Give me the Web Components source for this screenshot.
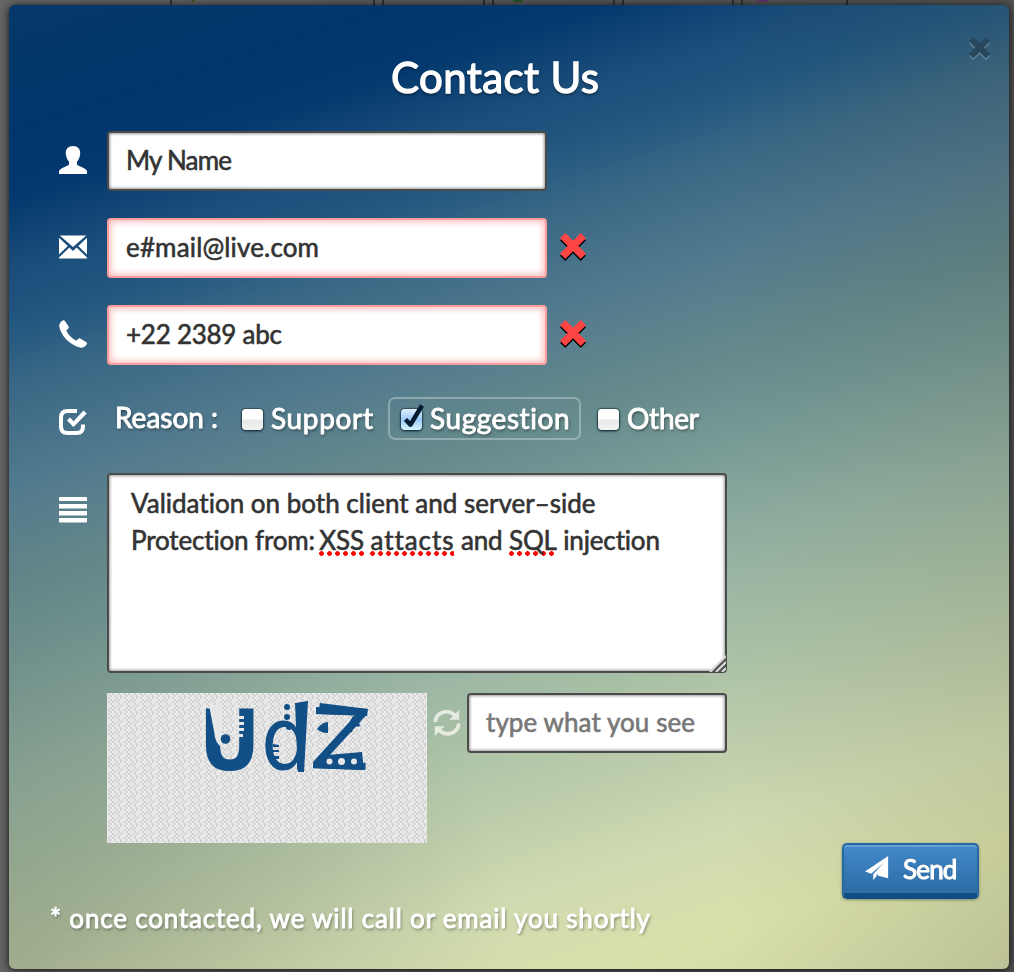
<!DOCTYPE html>
<html lang="en">
<head>
<meta charset="utf-8">
<title>Contact Us</title>
<style>
html,body{margin:0;height:972px;overflow:hidden;background:#565656;font-family:Lato,"Open Sans",sans-serif}
</style>
</head>
<body>
<contact-page></contact-page>
<script>
const define = (name, html, setup) => customElements.define(name, class extends HTMLElement {
  constructor() {
    super();
    this.attachShadow({mode: 'open'}).innerHTML = html;
  }
  connectedCallback() { if (setup) setup(this, this.shadowRoot); }
});

/* A single line of text tracked to fill a given width. */
define('fit-line', `<style>:host{display:block;white-space:nowrap;line-height:1}span{display:inline-block;-webkit-text-stroke:var(--stroke,.6px) currentColor}</style><span><slot></slot></span>`,
  (el, root) => {
    const s = root.querySelector('span');
    const w = +el.getAttribute('w');
    el.style.width = w + 'px';
    const n = el.textContent.length - 1;
    s.style.letterSpacing = ((w + 1 - s.getBoundingClientRect().width) / n).toFixed(3) + 'px';
  });

const icons = {
  user: '<path d="M14 0c4.700 0 7.500 3 7.200 7.500-.2 3.600-1.600 6.500-3.200 8.200v2.800c1 1.700 9 3.400 10 6.500V28H0v-3c1-3.100 9-4.800 10-6.500v-2.800C8.400 14 7 11.100 6.800 7.500 6.500 3 9.300 0 14 0z"/>',
  mail: '<path d="M.8 2.500h26.400L14 14zM0 4.800 8.800 13 0 21.500zM28 4.800V21.500L19.200 13zM10.400 14.500 14 18l3.600-3.500L28 24.500v1H0v-1z"/>',
  phone: '<path d="M3.200.8C4.500-.2 5.300.2 6.300 1.600L9.300 6c.8 1.300.6 2.200-.6 3.200L7.300 10.500c1.700 4 5.600 8 10 10.200l1.700-1.600c1-.9 1.900-1 3-.2l5 3.200c1.200.8 1.300 1.600.5 2.600-1.700 2.300-4.200 3.500-6.800 2.800C10.500 24.700 2 15.500.3 6.700-.1 4.500 1.100 2.300 3.200.8z"/>',
  check: '<path d="M18 3H8.500Q2 3 2 9.500v9Q2 25 8.500 25h9q6.500 0 6.500-6.500v-2" fill="none" stroke="#fff" stroke-width="4"/><path d="m8 12.500 3-3 3.600 3.700L24.500 2.500l3.300 3.100L14.500 19z"/>',
  lines: '<path d="M1 1h26a1 1 0 0 1 1 1v3H0V2a1 1 0 0 1 1-1zM0 8h28v4.500H0zM0 15h28v4.500H0zM0 22h28v3.500a1 1 0 0 1-1 1H1a1 1 0 0 1-1-1z"/>',
  refresh: '<path d="M2.300 13C2.500 3.700 14.500-.8 21.500 6.200M25.700 14.500C25.500 23.800 13.500 28.300 6.500 21.300" fill="none" stroke="currentColor" stroke-width="3.800"/><path d="M26.200 1v9.800h-9.800zM1.800 27V17.200h9.800z"/>',
  cross: '<path d="M0 5.500 5.500 0 13.500 8 21.500 0 27 5.500 19 13.500 27 21.500 21.500 27 13.500 19 5.500 27 0 21.500 8 13.500z"/>',
  plane: '<path d="M24 0 0 16l6.500 2.300L19.500 7 8.500 19v6l3.600-4.300L12 18.500l1.800 1.900L24 23z"/>'
};
define('ui-icon', `<style>:host{display:block;width:28px;height:28px;color:#fff;flex:none}svg{display:block;width:100%;height:100%;overflow:visible;fill:currentColor}</style><svg viewBox="0 0 28 28"></svg>`,
  (el, root) => { root.querySelector('svg').innerHTML = icons[el.getAttribute('name')]; });

define('form-row', `<style>:host{display:flex;align-items:flex-start;margin-left:50px;height:60px;margin-bottom:27px}
.i{width:48px;flex:none;padding-top:var(--icon-top,15px)}</style><div class="i"><slot name="icon"></slot></div><slot></slot>`);

define('text-box', `<style>:host{display:block;box-sizing:border-box;width:440px;height:60px;padding:14px 0 0 17px;background:#fff;color:#333;font-size:26px;border:2px solid #4b4b4b;border-radius:4px;box-shadow:inset 0 0 3px 1px #999;flex:none;position:relative}
:host([invalid]){border-color:#fc9c9c;box-shadow:inset 0 0 6px 2px #fdbcbc}
:host([hint]){color:#777}</style><slot></slot>`);

define('bad-mark', `<style>:host{display:block;margin:15px 0 0 13px}ui-icon{width:26px;height:26px;color:#ff4444;filter:drop-shadow(0 2px 0 #000)}</style><ui-icon name="cross"></ui-icon>`,
  (el, root) => root.querySelector('ui-icon').shadowRoot.querySelector('svg').setAttribute('viewBox', '0 0 27 27'));

define('check-option', `<style>:host{display:flex;box-sizing:border-box;height:43px;border:2px solid transparent;border-radius:7px;padding:5px 0 0 11px;flex:none;font-size:28px}
:host([on]){border-color:rgba(220,235,235,.38)}
.b{width:21px;height:21px;margin:5px 8px 0 0;border-radius:4px;background:linear-gradient(#fff 0 45%,#e9e9e9 55%,#f4f4f4);box-shadow:0 1px 3px #0b2733,0 0 1px 1px #3d5960;flex:none}
:host([on]) .b{background:linear-gradient(#e0f0ff,#9ccaf8 50%,#d3f4ff)}
svg{display:none;overflow:visible}:host([on]) svg{display:block}</style>
<div class="b"><svg width="21" height="21"><path d="m4.500 10.500 5 5.200L21-3.500" fill="none" stroke="#041b30" stroke-width="4.500" stroke-linejoin="round"/></svg></div><slot></slot>`);

define('spell-word', `<style>:host{display:inline-block;padding-bottom:3px;margin-bottom:-3px;background:radial-gradient(circle at 2.500px 2.500px,red 0 2px,transparent 2.700px) 0 100%/8px 5px repeat-x}</style><slot></slot>`);

define('captcha-image', `<style>:host{display:block;width:320px;height:150px;flex:none}svg{display:block;overflow:visible}text{font-family:"DejaVu Sans";fill:#114f86;stroke:#114f86;stroke-width:0}</style>
<svg width="320" height="150">
<defs><pattern id="p" width="16" height="16" patternUnits="userSpaceOnUse"><rect width="16" height="16" fill="#e9e9e9"/><path d="M1 0h2v2H1zM5 0h2v2H5zM11 0h2v2h-2zM3 2h2v2H3zM7 2h2v2H7zM13 2h2v2h-2zM1 4h2v2H1zM9 4h2v2H9zM13 4h2v2h-2zM3 6h2v2H3zM7 6h2v2H7zM11 6h2v2h-2zM1 8h2v2H1zM5 8h2v2H5zM9 8h2v2H9zM3 10h2v2H3zM11 10h2v2h-2zM15 10h1v2h-1zM5 12h2v2H5zM9 12h2v2H9zM13 12h2v2h-2zM3 14h2v2H3zM7 14h2v2H7zM11 14h2v2h-2z" fill="#d2d2d2"/></pattern></defs>
<rect width="320" height="150" fill="url(#p)"/>
<text transform="translate(92 76.500) scale(.91 1)" font-size="83" font-weight="700">U</text>
<text transform="translate(154 76) scale(.9 1)" font-size="88" style="stroke-width:0">d</text>
<text transform="translate(202 75) rotate(2) scale(1.050 1)" font-size="84" style="stroke-width:0">Z</text>
<g fill="#e7e7e7"><path d="M102 12h13v42q-7-3-8-16zM130 23h7v3h-7zM130 29h7v3h-7zM130 35h7v3h-7zM130 41h6v3h-6z"/></g>
<g fill="#114f86"><circle cx="118.500" cy="46" r="4.800"/><circle cx="180" cy="14" r="3"/><circle cx="180" cy="24" r="3"/><circle cx="182" cy="34" r="3"/><path d="M188 10l13-2-4 71h-6zM210 36q5-7 11-7v11q-7 0-11-4zM166 51l6 1v2h-6zM165 57h7v2h-7zM166 63h6v3h-6zM213 10l48 6-1 7-49-2zM220 62l35-3 2 18-50-2zM246 23l9 0-3 8 2 2-7 1-2 5-5 1-5 3z"/></g>
<g fill="#e7e7e7"><circle cx="222.500" cy="68.500" r="3"/><circle cx="234.500" cy="68.500" r="3.500"/><circle cx="247" cy="68.500" r="3"/></g>
</svg>`);

define('send-button', `<style>:host{display:flex;box-sizing:border-box;width:137px;height:56px;border:2px solid #2767a2;border-bottom:6px solid #104d84;border-radius:5px;background:linear-gradient(#4189ca,#2d6ca4);box-shadow:inset 0 2px 0 #65a0d6,0 1px 3px rgba(40,70,60,.5);padding:11px 0 0 21px;color:#fff;font-size:26px;text-shadow:0 -1px 1px #174d7d}
ui-icon{width:27px;height:27px;margin-right:11px}fit-line{--stroke:1.100px}</style><ui-icon name="plane"></ui-icon><fit-line w="54"><slot></slot></fit-line>`,
  (el, root) => {
    const s = root.querySelector('fit-line').shadowRoot.querySelector('span');
    s.style.letterSpacing = '-.8px';
  });

define('contact-dialog', `<style>
:host{display:block;position:relative;box-sizing:border-box;width:1000px;height:964px;margin-left:9px;border-radius:6px;overflow:hidden;color:#fff;
background:radial-gradient(ellipse 50% 50% at 0 100%,rgba(50,45,20,.2),transparent),linear-gradient(90deg,transparent 72%,rgba(50,45,20,.11)),
linear-gradient(162deg,#06396a 0,#00366b 10%,#03396e 15%,#1b4d7a 20.500%,#215680 24.500%,#3b6885 30%,#527a8e 37.500%,#64898c 45%,#719593 50%,#92b0a1 60%,#b4c7a8 72%,#cfdab1 82%,#d9e0aa 90%,#ced4a6 100%)}
.title{padding:51px 0 0 382px;height:75px;font-size:42px;text-shadow:0 2px 3px rgba(0,0,0,.5);--stroke:1.300px}
.close{position:absolute;left:960px;top:32px;width:22px;height:22px;color:#27475d;filter:drop-shadow(0 2px 0 #5d8098)}
.sh{text-shadow:1px 2px 3px rgba(0,0,0,.45);--stroke:.9px}
.reason{display:flex;align-items:flex-start;font-size:28px}
.reason>fit-line{margin:11px 13px 0 8px}
.reason check-option{margin-top:5px}
.grip{position:absolute;right:-1px;bottom:-1px}
.foot{display:flex;justify-content:flex-end;padding-right:30px}
.note{font-size:26px;margin:6px 0 0 41px}
</style>
<div class="title"><fit-line w="207">Contact Us</fit-line></div>
<ui-icon class="close" name="cross"></ui-icon>
<form-row><ui-icon slot="icon" name="user"></ui-icon><text-box><fit-line w="105">My Name</fit-line></text-box></form-row>
<form-row><ui-icon slot="icon" name="mail"></ui-icon><text-box invalid><fit-line w="192">e#mail@live.com</fit-line></text-box><bad-mark></bad-mark></form-row>
<form-row><ui-icon slot="icon" name="phone"></ui-icon><text-box invalid><fit-line w="155">+22 2389 abc</fit-line></text-box><bad-mark></bad-mark></form-row>
<form-row style="height:54px;--icon-top:16px"><ui-icon slot="icon" name="check"></ui-icon>
<div class="reason sh"><fit-line w="102">Reason :</fit-line>
<check-option style="margin-left:-1px"><fit-line w="101">Support</fit-line></check-option>
<check-option on style="width:193px;margin-left:14px"><fit-line w="139">Suggestion</fit-line></check-option>
<check-option style="margin-left:4px"><fit-line w="71">Other</fit-line></check-option></div></form-row>
<form-row style="height:200px;margin-bottom:20px;--icon-top:23px"><ui-icon slot="icon" name="lines"></ui-icon>
<text-box style="width:620px;height:200px;padding:15px 0 0 22px"><fit-line w="464">Validation on both client and server–side</fit-line><fit-line w="527" style="margin-top:11px">Protection from: <spell-word style="margin-left:-2px">XSS</spell-word> <spell-word style="letter-spacing:.95px">attacts</spell-word> and <spell-word>SQL</spell-word> injection</fit-line>
<svg class="grip" width="18" height="18"><path d="M1 18 18 1v17z" fill="#555"/><path d="M2 18 18 2M8 18 18 8M14 18l4-4" stroke="#ddd" stroke-width="2"/></svg></text-box></form-row>
<form-row style="height:150px;margin-bottom:0"><captcha-image></captcha-image><ui-icon name="refresh" style="margin:16px 6px 0;color:#e6ebe2"></ui-icon><text-box hint style="width:260px"><fit-line w="208">type what you see</fit-line></text-box></form-row>
<div class="foot"><send-button>Send</send-button></div>
<div class="note sh"><fit-line w="599">* once contacted, we will call or email you shortly</fit-line></div>`);

define('contact-page', `<style>:host{display:block;height:972px;background:linear-gradient(90deg,#656565,#575757 50%,#505050)}
.tabs{display:flex;gap:7px;height:5px;padding-left:170px}
.tabs i{display:block;box-sizing:border-box;height:5px;border:solid #303030;border-width:0 2px;padding-left:19px}
.tabs b{display:block;width:10px;height:2px;border-radius:0 0 4px 4px}
.shadow{filter:drop-shadow(0 1px 4px rgba(0,0,0,.85))}</style>
<div class="tabs"><i style="width:205px"><b style="width:4px;background:#4a4d22"></b></i><i style="width:103px"></i><i style="width:123px"><b style="background:#245325"></b></i><i style="width:112px"></i><i style="width:107px;padding-left:15px"><b style="background:#613069"></b></i></div>
<div class="shadow"><contact-dialog></contact-dialog></div>`);
</script>
</body>
</html>
